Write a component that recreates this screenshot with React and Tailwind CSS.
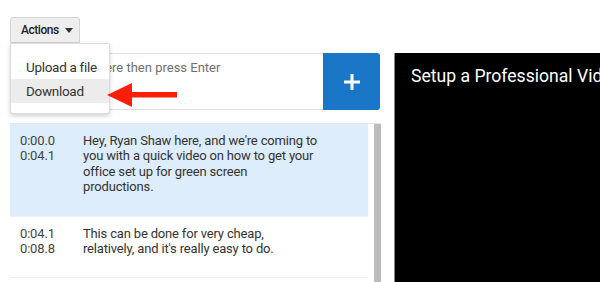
import React from 'react';

const rows = [
  {
    start: '0:00.0',
    end: '0:04.1',
    lines: [
      "Hey, Ryan Shaw here, and we're coming to",
      'you with a quick video on how to get your',
      'office set up for green screen',
      'productions.',
    ],
    active: true,
  },
  {
    start: '0:04.1',
    end: '0:08.8',
    lines: ['This can be done for very cheap,', "relatively, and it's really easy to do."],
  },
];

const SubtitleRow = ({ row }) => (
  <div
    className={`flex pl-[10px] pt-[9px] pb-[21px] leading-[15.4px] text-[13px] tracking-[-0.17px] text-[#333] border-b border-[#eeeeee] ${
      row.active ? 'bg-[#deedfc]' : 'bg-white'
    }`}
  >
    <div className="w-[63px] shrink-0 text-[#444]">
      <div>{row.start}</div>
      <div>{row.end}</div>
    </div>
    <p className="flex flex-col whitespace-nowrap">
      {row.lines.map((line, i) => (
        <span key={i}>{line}</span>
      ))}
    </p>
  </div>
);

const ActionsMenu = () => (
  <div className="relative w-[70px] mt-[17px]">
    <button className="flex items-center gap-[6px] h-[26px] w-full pl-[10px] bg-[#eeeeee] border border-[#d4d4d4] rounded-t-[3px] text-[12px] font-medium tracking-[-0.45px] text-[#222]">
      Actions
      <span className="w-0 h-0 border-l-[4px] border-r-[4px] border-t-[5px] border-l-transparent border-r-transparent border-t-[#333]" />
    </button>
    <div className="absolute left-0 top-full z-10 w-[100px] pt-[11px] pb-[10px] bg-white border border-[#dcdcdc] rounded-b-[3px] shadow-[0_2px_4px_rgba(0,0,0,0.18)] text-[13.5px] tracking-[-0.3px] text-[#333] whitespace-nowrap">
      <div className="h-[24px] leading-[24px] px-[15px]">Upload a file</div>
      <div className="h-[24px] leading-[24px] px-[15px] bg-[#ececec]">Download</div>
    </div>
    {/* red arrow pointing at Download */}
    <svg className="absolute z-20 left-[97px] top-[65px]" width="72" height="26" viewBox="0 0 72 26">
      <polygon points="0,13 25,1 25,25" fill="#fb1f0a" />
      <rect x="24" y="10" width="46" height="5.5" fill="#fb1f0a" />
    </svg>
  </div>
);

export default function App() {
  return (
    <div
      className="w-[600px] h-[282px] overflow-hidden bg-white flex pl-[10px]"
      style={{ fontFamily: 'Roboto, "Helvetica Neue", Arial, sans-serif' }}
    >
      <div className="w-[371px] shrink-0 flex flex-col">
        <ActionsMenu />
        <div className="flex mt-[10px] h-[57px] w-[370px]">
          <div className="flex-1 border border-[#dddddd] border-r-0 rounded-l-[2px] pt-[4px] pl-[10px] text-[13px] text-[#6f6f6f] whitespace-nowrap overflow-hidden">
            Type subtitle here then press Enter
          </div>
          <button className="w-[57px] bg-[#1a77c8] rounded-r-[3px] flex items-center justify-center">
            <svg width="16" height="16" viewBox="0 0 16 16">
              <rect x="6.5" y="0" width="3" height="16" fill="#fff" />
              <rect x="0" y="6.5" width="16" height="3" fill="#fff" />
            </svg>
          </button>
        </div>
        <div className="mt-[13px] flex flex-1 border-t border-[#e6e6e6] min-h-0">
          <div className="w-[358px]">
            {rows.map((row, i) => (
              <SubtitleRow key={i} row={row} />
            ))}
          </div>
          <div className="w-[7px] ml-[6px] bg-[#bdbdbd]" />
        </div>
      </div>
      <div className="flex-1 ml-[13px] mt-[53px] bg-black border-l border-[#888] overflow-hidden">
        <div className="pl-[16px] pt-[10px] text-[17.6px] text-white whitespace-nowrap">
          Setup a Professional Video Office for Green Screen
        </div>
      </div>
    </div>
  );
}
